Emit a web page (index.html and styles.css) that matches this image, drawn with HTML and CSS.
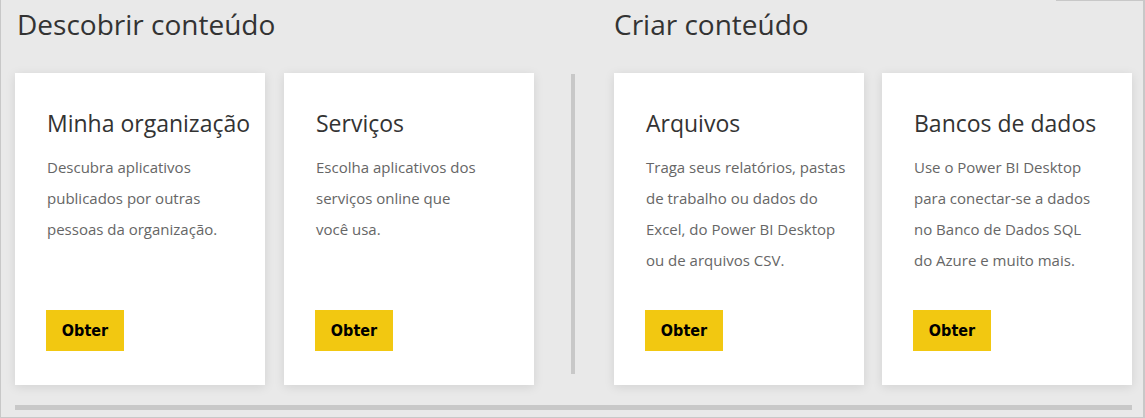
FILE: index.html
```html
<!DOCTYPE html>
<html lang="pt-BR">
<head>
<meta charset="utf-8">
<title>Obter dados</title>
<link rel="stylesheet" href="styles.css">
</head>
<body>
<div class="frame">
  <div class="row">
    <section class="group">
      <h2 class="group-title">Descobrir conteúdo</h2>
      <div class="cards">
        <div class="card">
          <h3 class="card-title">Minha organização</h3>
          <p class="card-text">Descubra aplicativos<br>publicados por outras<br>pessoas da organização.</p>
          <button class="btn">Obter</button>
        </div>
        <div class="card">
          <h3 class="card-title">Serviços</h3>
          <p class="card-text">Escolha aplicativos dos<br>serviços online que<br>você usa.</p>
          <button class="btn">Obter</button>
        </div>
      </div>
    </section>
    <div class="divider"></div>
    <section class="group group-create">
      <h2 class="group-title">Criar conteúdo</h2>
      <div class="cards">
        <div class="card">
          <h3 class="card-title">Arquivos</h3>
          <p class="card-text">Traga seus relatórios, pastas<br>de trabalho ou dados do<br>Excel, do Power BI Desktop<br>ou de arquivos CSV.</p>
          <button class="btn">Obter</button>
        </div>
        <div class="card">
          <h3 class="card-title">Bancos de dados</h3>
          <p class="card-text">Use o Power BI Desktop<br>para conectar-se a dados<br>no Banco de Dados SQL<br>do Azure e muito mais.</p>
          <button class="btn">Obter</button>
        </div>
      </div>
    </section>
  </div>
  <div class="bottom-bar"></div>
</div>
</body>
</html>
```
FILE: styles.css
```css
html, body {
  margin: 0;
  padding: 0;
}
body {
  background: #e9e9e9;
  font-family: "Open Sans", "Noto Sans", sans-serif;
}
.frame {
  position: relative;
  box-sizing: border-box;
  width: 1145px;
  height: 418px;
  border-left: 1px solid #c8c8c8;
  border-right: 2px solid #c8c8c8;
  border-bottom: 1px solid #c8c8c8;
  padding: 0 11px 0 14px;
  background: #e9e9e9;
  display: flex;
  flex-direction: column;
}
.frame::before {
  content: "";
  position: absolute;
  top: 0;
  left: 1055px;
  right: 0;
  height: 1px;
  background: #c8c8c8;
}
.row {
  display: flex;
  align-items: flex-start;
}
.group {
  display: flex;
  flex-direction: column;
}
.group-title {
  margin: 0;
  padding-left: 2px;
  height: 73px;
  font-weight: 400;
  font-size: 28px;
  line-height: 48px;
  color: #333;
}
.group-create .group-title {
  padding-left: 0;
}
.cards {
  display: flex;
  gap: 19px;
}
.group-create .cards {
  gap: 18px;
}
.card {
  box-sizing: border-box;
  width: 250px;
  height: 312px;
  background: #fff;
  box-shadow: 0 2px 10px rgba(0, 0, 0, 0.1);
  padding: 35px 0 0 32px;
  display: flex;
  flex-direction: column;
  align-items: flex-start;
}
.card-title {
  margin: 0;
  font-weight: 400;
  font-size: 23px;
  line-height: 30px;
  color: #333;
  white-space: nowrap;
}
.card-text {
  margin: 14px 0 0;
  font-size: 15px;
  line-height: 31px;
  color: #666;
  white-space: nowrap;
}
.btn {
  margin-top: auto;
  margin-bottom: 34px;
  margin-left: -1px;
  width: 78px;
  height: 41px;
  border: 0;
  padding: 0;
  background: #f2c811;
  color: #000;
  font-family: "DejaVu Sans Condensed", "DejaVu Sans", sans-serif;
  font-weight: 700;
  font-size: 16px;
}
.divider {
  width: 5px;
  height: 300px;
  margin: 74px 39px 0 37px;
  background: #c8c8c8;
}
.bottom-bar {
  margin-top: 20px;
  height: 5px;
  width: 1117px;
  background: #c8c8c8;
}
```
